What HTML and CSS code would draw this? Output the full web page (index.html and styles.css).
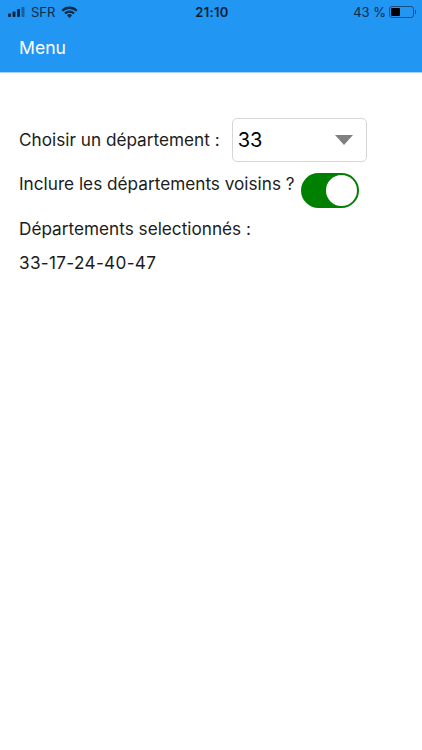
FILE: index.html
```html
<!DOCTYPE html>
<html lang="fr">
<head>
    <meta charset="UTF-8">
    <meta name="viewport" content="width=device-width, initial-scale=1.0">
    <title>Menu</title>
    <link rel="stylesheet" href="styles.css">
</head>
<body>

    <div class="header">
        <div class="status-bar">
            <div class="status-left">
                <svg class="signal" width="18" height="10" viewBox="0 0 18 10">
                    <rect x="0" y="6.5" width="3" height="3.5" rx="0.7" fill="#0d2a47"/>
                    <rect x="4.5" y="4.5" width="3" height="5.5" rx="0.7" fill="#0d2a47"/>
                    <rect x="9" y="2" width="3" height="8" rx="0.7" fill="#0d2a47"/>
                    <rect x="13.5" y="0" width="3" height="10" rx="0.7" fill="#1a5f9f"/>
                </svg>
                <span>SFR</span>
                <svg class="wifi" width="17" height="12" viewBox="0 0 17 12">
                    <path d="M0.4 3.9 A11.5 11.5 0 0 1 16.6 3.9 L15 5.6 A9.2 9.2 0 0 0 2 5.6 Z" fill="#0d2a47"/>
                    <path d="M3.2 6.7 A7.5 7.5 0 0 1 13.8 6.7 L12.2 8.3 A5.2 5.2 0 0 0 4.8 8.3 Z" fill="#0d2a47"/>
                    <path d="M6 9.4 A3.5 3.5 0 0 1 11 9.4 L8.5 12 Z" fill="#0d2a47"/>
                </svg>
            </div>
            <div class="status-time">21:10</div>
            <div class="status-right">
                <span>43 %</span>
                <div class="battery"><div class="battery-level"></div></div>
                <div class="battery-tip"></div>
            </div>
        </div>
        <div class="title">Menu</div>
    </div>

    <div class="content">
        <div class="row">
            <span class="select-label">Choisir un département :</span>
            <div class="select">
                <span>33</span>
                <div class="arrow"></div>
            </div>
        </div>
        <div class="row row-toggle">
            <span>Inclure les départements voisins ?</span>
            <div class="toggle"><div class="knob"></div></div>
        </div>
        <p class="line">Départements selectionnés :</p>
        <p class="line numbers">33-17-24-40-47</p>
    </div>

</body>
</html>
```

FILE: styles.css
```css
/* General Styles */
body {
    margin: 0;
    padding: 0;
    font-family: 'Inter', 'Liberation Sans', sans-serif;
    background: white;
    color: #1c1c1c;
    font-size: 17.2px;
}

/* Header */
.header {
    background: #2196f3;
    height: 72px;
    border-bottom: 1px solid #a8d3f7;
}

.status-bar {
    display: flex;
    justify-content: space-between;
    align-items: center;
    height: 24px;
    padding: 0 6px 0 8px;
    font-size: 13px;
    color: #0d2a47;
}

.status-left {
    display: flex;
    align-items: center;
    gap: 6px;
    flex: 1;
}

.signal {
    margin-right: -1px;
}

.status-time {
    font-weight: 600;
    letter-spacing: 0.3px;
    color: #0a1f33;
}

.status-right {
    display: flex;
    align-items: center;
    justify-content: flex-end;
    flex: 1;
}

.battery {
    width: 25px;
    height: 12px;
    margin-left: 3px;
    box-sizing: border-box;
    border: 1px solid #1a4f80;
    border-radius: 3px;
    padding: 1px;
}

.battery-level {
    width: 9px;
    height: 100%;
    background: black;
    border-radius: 1px;
}

.battery-tip {
    width: 1px;
    height: 4px;
    margin-left: 1px;
    background: #1a4f80;
}

.title {
    color: white;
    font-size: 17.6px;
    padding: 13px 19px 0;
}

/* Content */
.content {
    padding: 45px 19px 0;
}

.row {
    display: flex;
    align-items: center;
}

.select-label {
    padding-bottom: 2px;
}

.select {
    display: flex;
    justify-content: space-between;
    align-items: center;
    width: 135px;
    height: 44px;
    margin-left: 12px;
    padding: 0 13px 0 5px;
    box-sizing: border-box;
    border: 1px solid #d6d6d6;
    border-radius: 5px;
    font-size: 20px;
    color: black;
}

.arrow {
    width: 0;
    height: 0;
    border-left: 9px solid transparent;
    border-right: 9px solid transparent;
    border-top: 10px solid #808080;
}

.row-toggle {
    margin-top: 11px;
    align-items: flex-start;
}

.toggle {
    display: flex;
    justify-content: flex-end;
    align-items: center;
    width: 58px;
    height: 35px;
    margin-left: 6px;
    padding: 0 2px;
    box-sizing: border-box;
    background: #008000;
    border-radius: 18px;
}

.knob {
    width: 31px;
    height: 31px;
    background: white;
    border-radius: 50%;
}

.line {
    margin: 9px 0 0;
    line-height: 23px;
}

.numbers {
    margin-top: 11px;
    letter-spacing: 0.3px;
}
```
